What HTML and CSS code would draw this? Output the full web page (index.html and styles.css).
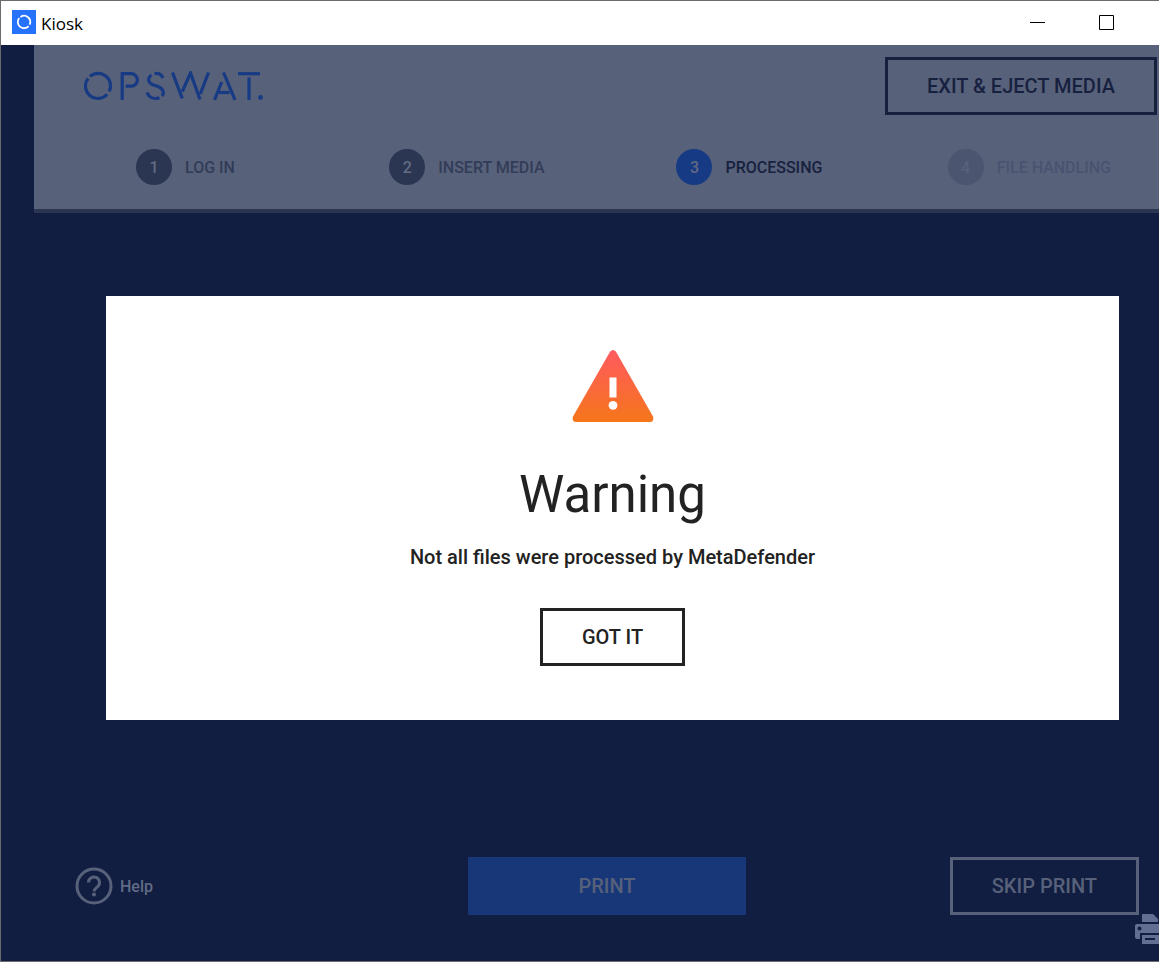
FILE: index.html
```html
<!DOCTYPE html>
<html lang="en">
	<head>
		<meta charset="utf-8">
		<meta name="viewport" content="width=device-width, initial-scale=1.0">
		<title>Kiosk</title>
		<link rel="stylesheet" href="styles.css">
	</head>
	<body>
		<div class="window">
			<header class="titlebar">
				<svg class="app-icon" viewBox="0 0 24 24" aria-hidden="true">
					<rect width="24" height="24" fill="#2672fb"/>
					<g fill="none" stroke="#fff" stroke-width="1.800">
						<path d="M8.500 6.900A6.200 6.200 0 0 1 17.600 14.700"/>
						<path d="M16.600 16.200A6.200 6.200 0 0 1 7.300 8"/>
					</g>
				</svg>
				<span class="window-title">Kiosk</span>
				<button class="window-button" aria-label="Minimize">
					<svg viewBox="0 0 15 15"><path d="M0 7.500h15"/></svg>
				</button>
				<button class="window-button" aria-label="Maximize">
					<svg viewBox="0 0 15 15"><path d="M.5.5h14v14H.5z"/></svg>
				</button>
			</header>

			<div class="kiosk">
				<div class="kiosk-header">
					<div class="brand-row">
						<svg class="logo" viewBox="0 0 180 30" role="img" aria-label="OPSWAT">
							<g fill="none" stroke="#173a84" stroke-width="3.200">
								<path d="M6 5.400A12.400 12.400 0 0 1 25.200 20.400"/>
								<path d="M23.200 23.300A12.400 12.400 0 0 1 4.100 7.500"/>
								<path d="M38.200 29V2.700h9a6.200 6.200 0 0 1 0 12.400h-5.500"/>
								<path d="M79 7C77.500 3.500 74 2 70.500 2.700"/>
								<path d="M67.500 4C63 7 64 12 69 13.800L74 15.600C79.500 17.600 80.500 22 78 25"/>
								<path d="M75.500 26.700C70.500 28.600 65 27 63 21.500"/>
								<path d="M88.500 1.500l9.800 26"/>
								<path d="M98.300 20.500L106.500 2l9.500 26.500"/>
								<path d="M116.300 23L124.500 1.500"/>
								<path d="M130.500 28.800L137.700 11"/>
								<path d="M139.500 1.500l11.500 27.300"/>
								<path d="M135 21.500h10.500"/>
								<path d="M154 2.700h22"/>
								<path d="M165 6.500V29"/>
							</g>
							<circle cx="176.500" cy="26.500" r="2.400" fill="#173a84"/>
						</svg>
						<button class="button button-dark">EXIT &amp; EJECT MEDIA</button>
					</div>
					<ol class="steps">
						<li class="step"><span class="step-number">1</span>LOG IN</li>
						<li class="step"><span class="step-number">2</span>INSERT MEDIA</li>
						<li class="step step-current"><span class="step-number">3</span>PROCESSING</li>
						<li class="step step-pending"><span class="step-number">4</span>FILE HANDLING</li>
					</ol>
				</div>

				<div class="dialog" role="dialog" aria-labelledby="dialog-title">
					<svg class="warning-icon" viewBox="0 0 82 72" aria-hidden="true">
						<defs>
							<linearGradient id="warning-fill" x1="0" y1="0" x2="0" y2="1">
								<stop offset="0" stop-color="#ff5a5f"/>
								<stop offset="1" stop-color="#f5761a"/>
							</linearGradient>
						</defs>
						<path fill="url(#warning-fill)" d="M38 1.700Q41-1.500 44 1.700L81 66.500Q82.500 71.500 78 72H4Q-.5 71.500 1 66.500z"/>
						<path fill="#fff" d="M37.500 27.500h7v20h-7z"/>
						<circle cx="41" cy="55.300" r="4.400" fill="#fff"/>
					</svg>
					<h1 class="dialog-title" id="dialog-title">Warning</h1>
					<p class="dialog-text">Not all files were processed by MetaDefender</p>
					<button class="button button-plain">GOT IT</button>
				</div>

				<footer class="kiosk-footer">
					<a class="help" href="#">
						<svg viewBox="0 0 38 38" aria-hidden="true">
							<circle cx="19" cy="19" r="17"/>
							<path d="M13.500 15.500a5.500 5.500 0 1 1 9.500 3.700c-2 2-4 2.800-4 5.300"/>
							<circle class="dot" cx="19" cy="27.500" r="2"/>
						</svg>
						Help
					</a>
					<button class="button button-print">PRINT</button>
					<button class="button button-light">SKIP PRINT</button>
				</footer>

				<!-- the printer runs off the right edge of the window -->
				<svg class="printer" viewBox="0 0 24 30" aria-hidden="true">
					<path fill="#626e92" d="M7 0h11l5 5v3H7z"/>
					<path fill="#626e92" d="M2 10h22v9H5v6H2q-2 0-2-2V12q0-2 2-2z"/>
					<path fill="#626e92" d="M7 21h17v9H7z"/>
					<path fill="#111e41" d="M10 24h10v2H10z"/>
					<circle cx="4.500" cy="14.500" r="2" fill="#111e41"/>
				</svg>
			</div>
		</div>
	</body>
</html>
```

FILE: styles.css
```css
* {
	box-sizing: border-box;
}
body {
	margin: 0;
	font-family: Roboto, "Liberation Sans", sans-serif;
	font-weight: 500;
}
button {
	font: inherit;
}

.window {
	display: flex;
	flex-direction: column;
	min-height: 100vh;
	border: 1px solid #6b6b6b;
	border-right: 0;
	overflow: hidden;
}
.titlebar {
	display: flex;
	align-items: center;
	height: 44px;
	padding: 0 0 2px 11px;
	background: #fff;
	color: #000;
}
.app-icon {
	width: 24px;
	height: 24px;
}
.window-title {
	flex: 1;
	margin-left: 5px;
	padding-top: 2px;
	font-family: "Open Sans", sans-serif;
	font-size: 17px;
	font-weight: 400;
}
.window-button {
	display: flex;
	align-items: center;
	justify-content: center;
	width: 69px;
	height: 42px;
	padding: 0;
	border: 0;
	background: none;
}
.window-button:last-child {
	margin-right: 18px;
}
.window-button svg {
	width: 15px;
	height: 15px;
	fill: none;
	stroke: #000;
}

.kiosk {
	position: relative;
	display: flex;
	flex: 1;
	flex-direction: column;
	justify-content: space-between;
	padding-left: 33px;
	background: #111e41;
}
.kiosk-header {
	height: 168px;
	padding: 12px 2px 0 50px;
	border-bottom: 4px solid #2b3652;
	background: #58617a;
}
.brand-row {
	display: flex;
	align-items: center;
	justify-content: space-between;
}
.logo {
	width: 180px;
	height: 30px;
}
.button {
	height: 58px;
	padding: 0 39px;
	border: 3px solid;
	background: none;
	font-size: 20px;
}
.button-dark {
	color: #17213f;
}
.button-plain {
	color: #222;
}
.button-light {
	justify-self: end;
	border-color: #58617a;
	color: #58617a;
}
.button-print {
	width: 278px;
	border: 0;
	background: #173779;
	color: #58617a;
}

.steps {
	display: grid;
	grid-template-columns: 254fr 288fr 272fr auto;
	margin: 34px 46px 0 52px;
	padding: 0;
	list-style: none;
}
.step {
	display: flex;
	align-items: center;
	gap: 13px;
	color: #323c58;
	font-size: 16px;
}
.step-number {
	display: flex;
	align-items: center;
	justify-content: center;
	width: 36px;
	height: 36px;
	border-radius: 50%;
	background: #2b3652;
	color: #626b82;
}
.step-current {
	color: #17213f;
}
.step-current .step-number {
	background: #173a84;
}
.step-pending {
	color: #495370;
}
.step-pending .step-number {
	background: #4b5570;
	color: #58617a;
}

.dialog {
	position: absolute;
	top: 251px;
	right: 40px;
	left: 105px;
	display: flex;
	flex-direction: column;
	align-items: center;
	padding: 54px 40px;
	background: #fff;
	color: #222;
}
.warning-icon {
	width: 82px;
	height: 72px;
}
.dialog-title {
	margin: 41px 0 0;
	font-size: 51px;
	font-weight: 400;
	line-height: 64px;
}
.dialog-text {
	margin: 16px 0 37px;
	font-size: 20px;
	line-height: 28px;
}

.kiosk-footer {
	display: grid;
	grid-template-columns: 1fr auto 1fr;
	align-items: center;
	padding: 0 20px 46px 41px;
}
.help {
	display: flex;
	align-items: center;
	justify-self: start;
	gap: 7px;
	color: #626b85;
	font-size: 16px;
	text-decoration: none;
}
.help svg {
	width: 38px;
	height: 38px;
	fill: none;
	stroke: #58617a;
	stroke-width: 3;
}
.help .dot {
	fill: #58617a;
	stroke: none;
}
.printer {
	position: absolute;
	right: 0;
	bottom: 17px;
	width: 24px;
	height: 30px;
}
```
